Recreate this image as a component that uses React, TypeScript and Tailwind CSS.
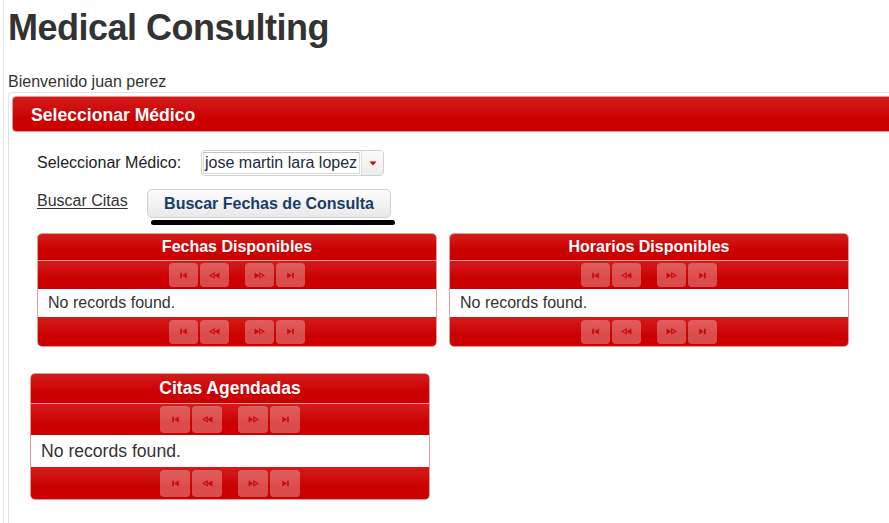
import React from "react";

const Icon = ({ kind }: { kind: "first" | "prev" | "next" | "last" }) => {
  const c = "#cc0a0a";
  return (
    <svg width="11" height="7" viewBox="0 0 10 6">
      {kind === "first" && (
        <>
          <rect x="2" y="0.5" width="1.6" height="5" fill={c} />
          <polygon points="8,0.3 3.8,3 8,5.7" fill={c} />
        </>
      )}
      {kind === "prev" && (
        <>
          <polygon points="4.8,0.8 1,3 4.8,5.2" fill="none" stroke={c} strokeWidth="1" />
          <polygon points="9.5,0.3 5,3 9.5,5.7" fill={c} />
        </>
      )}
      {kind === "next" && (
        <>
          <polygon points="0.5,0.3 5,3 0.5,5.7" fill={c} />
          <polygon points="5.2,0.8 9,3 5.2,5.2" fill="none" stroke={c} strokeWidth="1" />
        </>
      )}
      {kind === "last" && (
        <>
          <polygon points="2,0.3 6.2,3 2,5.7" fill={c} />
          <rect x="6.4" y="0.5" width="1.6" height="5" fill={c} />
        </>
      )}
    </svg>
  );
};

const Paginator = ({ large, bottom }: { large?: boolean; bottom?: boolean }) => {
  const btn = large
    ? "w-[30px] h-[27px] rounded-[4px] bg-white/30 flex items-center justify-center"
    : "w-[29px] h-[24px] rounded-[4px] bg-white/30 flex items-center justify-center";
  const h = large ? (bottom ? "h-[32px]" : "h-[31px]") : bottom ? "h-[29px]" : "h-[28px]";
  return (
    <div
      className={`${h} bg-linear-to-b from-[#d41a1a] to-[#cc0000] to-60% flex items-center justify-center gap-[2px]`}
    >
      <div className={btn}>
        <Icon kind="first" />
      </div>
      <div className={btn}>
        <Icon kind="prev" />
      </div>
      <div className="w-[12px]" />
      <div className={btn}>
        <Icon kind="next" />
      </div>
      <div className={btn}>
        <Icon kind="last" />
      </div>
    </div>
  );
};

const DataTable = ({ title, large }: { title: string; large?: boolean }) => (
  <div className="w-[400px] rounded-[5px] border border-[#e29c9c] overflow-hidden">
    <div
      className={`${large ? "h-[30px] text-[17.5px]" : "h-[27px] text-[16px]"} bg-linear-to-b from-[#d41a1a] to-[#cc0000] to-60% border-b border-[#ef9e9e] flex items-center justify-center text-white font-bold`}
    >
      {title}
    </div>
    <Paginator large={large} />
    <div
      className={`${large ? "h-[32px] text-[17.6px] pl-[10px]" : "h-[28px] text-[16px] pl-[10px]"} bg-white flex items-center text-[#333]`}
    >
      No records found.
    </div>
    <Paginator large={large} bottom />
  </div>
);

export default function App() {
  return (
    <div className="w-[889px] h-[523px] overflow-hidden bg-white font-['Liberation_Sans',Arial,sans-serif] text-[#333]">
      <div className="h-full ml-[3px] border-l border-[#e8e8e8] pl-[4px]">
        <h1 className="pt-[8px] text-[36px] leading-[40px] font-bold tracking-[-0.5px] text-[#333]">
          Medical Consulting
        </h1>
        <div className="mt-[25px] text-[16px] leading-[18px] text-[#333]">Bienvenido juan perez</div>
        <div className="mt-[1px] w-[900px] h-[500px] border border-[#e3e3e3] rounded-[4px] p-[3px]">
          <div className="h-[36px] rounded-[4px] border border-[#e39999] bg-linear-to-b from-[#d41a1a] to-[#cc0000] to-60% flex items-center pl-[18px] pt-[3px] text-white font-bold text-[17.6px]">
            Seleccionar Médico
          </div>
          <div className="pl-[18px]">
            <div className="ml-[7px] mt-[18px] flex items-center h-[26px]">
              <div className="w-[164px] text-[16px] text-[#222]">Seleccionar Médico:</div>
              <div className="w-[183px] h-[26px] border border-[#d2d2d2] rounded-[4px] flex bg-white overflow-hidden">
                <div className="m-[1px] flex-1 border border-[#dadada] border-t-[#c2c2c2] flex items-center pl-[1px] text-[16px] text-[#1d2b44] whitespace-nowrap overflow-hidden">
                  jose martin lara lopez
                </div>
                <div className="w-[22px] border-l border-[#dcdcdc] bg-linear-to-b from-[#fbfbfb] to-[#ececec] flex items-center justify-center">
                  <svg width="8" height="5" viewBox="0 0 8 5">
                    <polygon points="0.5,0.5 7.5,0.5 4,4.5" fill="#cc0000" />
                  </svg>
                </div>
              </div>
            </div>
            <div className="ml-[7px] mt-[13px] flex items-start">
              <a className="mt-[3px] w-[110px] text-[16px] leading-[18px] text-[#333] underline underline-offset-[2px]">
                Buscar Citas
              </a>
              <div className="flex flex-col">
                <div className="w-[244px] h-[29px] rounded-[5px] border border-[#d0d0d0] bg-linear-to-b from-[#fcfcfc] to-[#e9e9e9] flex items-center justify-center text-[16px] font-bold text-[#173d6b]">
                  Buscar Fechas de Consulta
                </div>
                <div className="mt-[2px] ml-[4px] w-[244px] h-[5px] rounded-full bg-black" />
              </div>
            </div>
            <div className="ml-[7px] mt-[8px] flex gap-[12px]">
              <DataTable title="Fechas Disponibles" />
              <DataTable title="Horarios Disponibles" />
            </div>
            <div className="mt-[26px]">
              <DataTable title="Citas Agendadas" large />
            </div>
          </div>
        </div>
      </div>
    </div>
  );
}
